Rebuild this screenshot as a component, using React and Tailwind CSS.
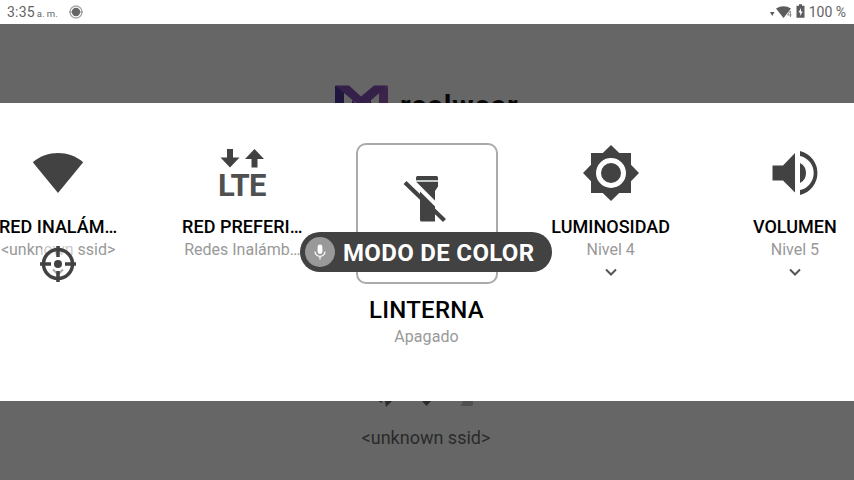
import React from 'react';

const INK = '#424242';

function WifiIcon() {
  return (
    <svg viewBox="0 0 56 56" className="size-14" fill={INK}>
      <path d="M2.800 17.200C10 11 19 8 28 8s18 3 25.200 9.200L28 48z" />
    </svg>
  );
}

function LteIcon() {
  return (
    <div className="flex h-14 flex-col items-center">
      <svg viewBox="0 0 56 28" className="h-7 w-14 shrink-0" fill={INK}>
        <path d="M13 4h6v8.500h6.500L16 22.500 6.500 12.500H13zM37.500 22.500h6V14H50L40.500 4 31 14h6.500z" />
      </svg>
      <div className="-mt-[3px] -ml-[1px] text-[31px] leading-[32px] font-bold tracking-[-0.8px] text-[#505050]">LTE</div>
    </div>
  );
}

function FlashlightOffIcon() {
  return (
    <svg viewBox="0 0 56 56" className="-ml-[3px] size-14" fill={INK}>
      <path d="M18 5.500q0-1.500 1.500-1.500h19q1.500 0 1.500 1.500V8H18z" />
      <path d="M18 8h22v2H18z" fill="#c4cbc9" />
      <path d="M18 10h22v4.500l-3 4.500v30.500H23.500q-1.500 0-1.500-1.500V19L18 14.500z" />
      <path d="M11.500 6L48.500 43" stroke="#fff" strokeWidth="4" />
      <path d="M7 10.500L46.500 48.500" stroke={INK} strokeWidth="4.200" />
    </svg>
  );
}

function BrightnessIcon() {
  return (
    <svg viewBox="0 0 56 56" className="size-14">
      <path d="M48 36.200L56 28l-8-8.200V8H36.200L28 0l-8.200 8H8v11.800L0 28l8 8.200V48h11.800L28 56l8.200-8H48z" fill={INK} />
      <circle cx="28" cy="28" r="12.500" fill={INK} stroke="#fff" strokeWidth="5" />
    </svg>
  );
}

function VolumeIcon() {
  return (
    <svg viewBox="0 0 56 56" className="size-14" fill={INK}>
      <path d="M5.500 20.500H16L28 8v39.500L16 35.500H5.500zM33 18c4 2 6 5.500 6 10s-2 8-6 10z" />
      <path d="M33 6a22.600 22.600 0 0 1 0 44v-5a17.400 17.400 0 0 0 0-34z" />
    </svg>
  );
}

function Chevron() {
  return (
    <svg viewBox="0 0 12 8" className="mt-2 h-2 w-3" fill="none" stroke="#555" strokeWidth="2">
      <path d="M1 1.500l5 5 5-5" />
    </svg>
  );
}

function Tile({ icon, title, sub, more }) {
  return (
    <div className="flex w-[184.2px] shrink-0 flex-col items-center pt-[42px]">
      {icon}
      <div className="mt-[15px] text-[18px] leading-[22px] font-medium tracking-[0.04px] whitespace-nowrap text-black">{title}</div>
      <div className="mt-px text-[16px] leading-[21px] whitespace-nowrap text-[#999]">{sub}</div>
      {more && <Chevron />}
    </div>
  );
}

function StatusBar() {
  return (
    <div className="flex h-6 shrink-0 items-center bg-white pr-[8px] pl-[7px] text-[14px] text-[#636363]">
      <span className="leading-6 tracking-[0.2px]">3:35</span>
      <span className="ml-[2px] pt-[3px] text-[9.500px] leading-5">a. m.</span>
      <svg viewBox="0 0 14 14" className="ml-[11px] size-[14px]" fill="none">
        <circle cx="7" cy="7" r="6" stroke="#aaa" strokeWidth="1.300" />
        <circle cx="7" cy="7" r="4.200" fill="#666" />
        <path d="M0 7h3M11 7h3" stroke="#888" />
      </svg>
      <svg viewBox="0 0 40 16" className="ml-auto h-4 w-10" fill="#5c5c5c">
        <path d="M2 8h4.500l-2.200 4zM8 4.500q7.500-4.500 15 0l-7.500 9.500z" />
        <path d="M19.500 9h4v5h-3.500z" fill="#fff" />
        <path d="M22 7l-2.500 4h4M22.500 7v6" fill="none" stroke="#777" strokeWidth=".8" />
        <path d="M28.500 1.800h2.500V.3h3v1.500h2.500v12h-8z" />
        <path d="M33 4l-2.500 4.500h1.700V12l2.500-4.500H33z" fill="#fff" />
      </svg>
      <span className="ml-[1px] leading-6">100 %</span>
    </div>
  );
}

export default function App() {
  return (
    <div className="relative flex h-[480px] w-[854px] flex-col overflow-hidden bg-[#666] font-['Roboto','Noto_Sans',sans-serif]">
      <StatusBar />
      <div className="flex h-[79px] shrink-0 overflow-hidden pt-[61px] pl-[335px]">
        <svg viewBox="0 0 54 54" className="h-[54px] w-[54px] shrink-0">
          <path d="M0 1h9v45H0z" fill="#1f1640" />
          <path d="M17 15l9 9v20h-9zM36 15l-9 9v20h9z" fill="#25163f" />
          <path d="M44 7l9-6v45h-9z" fill="#3c2449" />
          <path d="M0 .5h14l12 11L39 .5h14L27 23z" fill="#35204a" />
        </svg>
        <div className="mt-[3px] ml-[11px] text-[29px] leading-9 font-bold tracking-[0.75px] text-[#080808]">realwear</div>
      </div>

      <div className="flex h-[298px] shrink-0 justify-center overflow-hidden bg-white">
        <div className="mr-[1px] flex shrink-0">
          <Tile icon={<WifiIcon />} title="RED INALÁM…" sub="<unknown ssid>" more />
          <Tile icon={<LteIcon />} title="RED PREFERI…" sub="Redes Inalámb…" />
          <div className="flex w-[184.2px] shrink-0 flex-col items-center pt-10">
            <div className="mr-[-1px] flex h-[141px] w-[142px] justify-center rounded-[10px] border-2 border-[#aaa] pt-[27px]">
              <FlashlightOffIcon />
            </div>
            <div className="mt-[11px] text-[24px] leading-[30px] font-medium tracking-[0.25px] text-black">LINTERNA</div>
            <div className="mt-[2px] text-[16px] leading-[20px] tracking-[0.1px] text-[#999]">Apagado</div>
          </div>
          <Tile icon={<BrightnessIcon />} title="LUMINOSIDAD" sub="Nivel 4" more />
          <Tile icon={<VolumeIcon />} title="VOLUMEN" sub="Nivel 5" more />
        </div>
      </div>

      <div className="flex h-[79px] shrink-0 flex-col items-center">
        <svg viewBox="0 0 100 8" className="h-2 w-[100px]" fill="#2c2c2c">
          <path d="M1 0h4v2zM8 0h7l-6 6zM45 0h9l-4.500 5z" />
          <path d="M86 0h10v3q0 2-2 2H84z" fill="#505050" />
        </svg>
        <div className="mt-[17px] mr-[2px] text-[18px] leading-6 text-[#2a2a2a]">&lt;unknown ssid&gt;</div>
      </div>

      <div className="absolute top-[232px] left-[300px] flex h-10 w-[252px] items-center rounded-full bg-[#424242] pl-[5px]">
        <div className="flex size-[30px] items-center justify-center rounded-full bg-[#999]">
          <svg viewBox="0 0 12 16" className="h-4 w-3" fill="none">
            <rect x="3.600" y="0.500" width="4.800" height="9.500" rx="2.400" fill="#fff" />
            <path d="M1 7.500a5 4.800 0 0 0 10 0M6 12.300V15.500" stroke="#fff" strokeWidth="1.200" />
          </svg>
        </div>
        <span className="ml-2 pt-[2px] text-[24px] leading-[38px] font-bold tracking-[0.33px] whitespace-nowrap text-white">MODO DE COLOR</span>
      </div>

      <svg viewBox="0 0 36 36" className="absolute top-[246px] left-[40px] size-9 overflow-visible" fill="none">
        <circle cx="18" cy="18" r="22" fill="#fff" fillOpacity=".5" />
        <circle cx="18" cy="18" r="14.500" stroke={INK} strokeWidth="3.500" />
        <path d="M18 0v11M18 25v11M0 18h11M25 18h11" stroke={INK} strokeWidth="3.500" />
        <circle cx="18" cy="18" r="4" fill={INK} />
      </svg>
    </div>
  );
}
